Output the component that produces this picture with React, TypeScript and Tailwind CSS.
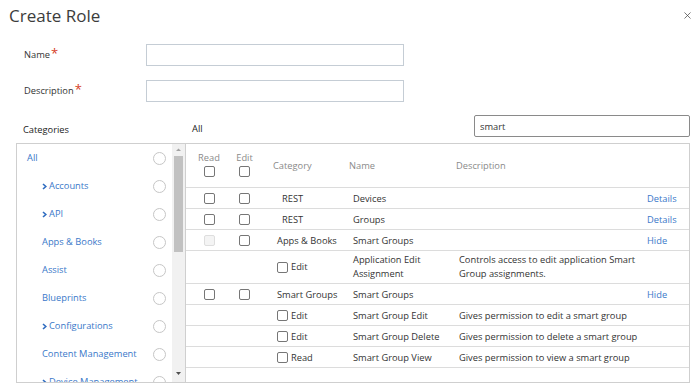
import { X } from "lucide-react";

type Cat = { label: string; chevron?: boolean; root?: boolean };

const categories: Cat[] = [
  { label: "All", root: true },
  { label: "Accounts", chevron: true },
  { label: "API", chevron: true },
  { label: "Apps & Books" },
  { label: "Assist" },
  { label: "Blueprints" },
  { label: "Configurations", chevron: true },
  { label: "Content Management" },
  { label: "Device Management", chevron: true },
];

function Chevron() {
  return (
    <svg width="5" height="7" viewBox="0 0 5 7" className="mr-[2px] shrink-0">
      <path d="M1 1 L3.8 3.5 L1 6" fill="none" stroke="#2f6cc0" strokeWidth="1.6" />
    </svg>
  );
}

function Box({ disabled }: { disabled?: boolean }) {
  return (
    <div
      className={
        disabled
          ? "w-[11px] h-[11px] rounded-[2px] border border-[#dedede] bg-[#f4f4f4]"
          : "w-[11px] h-[11px] rounded-[2px] border border-[#767676] bg-white"
      }
    />
  );
}

function Link({ children }: { children: React.ReactNode }) {
  return <span className="text-[#3a78c9]">{children}</span>;
}

type Row = {
  read?: "box" | "disabled";
  edit?: boolean;
  category?: string;
  indent?: boolean;
  sub?: string;
  name: React.ReactNode;
  desc?: React.ReactNode;
  link?: string;
  tall?: boolean;
};

const rows: Row[] = [
  { read: "box", edit: true, category: "REST", indent: true, name: "Devices", link: "Details" },
  { read: "box", edit: true, category: "REST", indent: true, name: "Groups", link: "Details" },
  { read: "disabled", edit: true, category: "Apps & Books", name: "Smart Groups", link: "Hide" },
  {
    sub: "Edit",
    name: (
      <>
        Application Edit
        <br />
        Assignment
      </>
    ),
    desc: (
      <>
        Controls access to edit application Smart
        <br />
        Group assignments.
      </>
    ),
    tall: true,
  },
  { read: "box", edit: true, category: "Smart Groups", name: "Smart Groups", link: "Hide" },
  { sub: "Edit", name: "Smart Group Edit", desc: "Gives permission to edit a smart group" },
  { sub: "Edit", name: "Smart Group Delete", desc: "Gives permission to delete a smart group" },
  { sub: "Read", name: "Smart Group View", desc: "Gives permission to view a smart group" },
];

export default function App() {
  return (
    <div className="w-[700px] h-[388px] overflow-hidden bg-white text-[#333] font-['Open_Sans',sans-serif] text-[9.3px]">
      <div className="flex items-center justify-between h-[31px] pl-[9px] pr-[7px]">
        <h1 className="text-[17px] leading-none text-[#3c3c3c]">Create Role</h1>
        <X size={11} strokeWidth={1.6} color="#444" />
      </div>

      <div className="mt-[13px] flex flex-col gap-[14px]">
        {["Name", "Description"].map((l) => (
          <div key={l} className="flex items-center h-[22px]">
            <label className="w-[146px] pl-[24px] text-[#333] flex items-center">
              {l}
              <span className="relative -top-[2px] text-[#d6401f] text-[13px] leading-none ml-[1px]">*</span>
            </label>
            <input className="w-[258px] h-[22px] border border-[#c5cdd5] outline-none" />
          </div>
        ))}
      </div>

      <div className="mt-[13px] flex items-end h-[22px] pl-[23px] pr-[10px]">
        <div className="w-[169px] leading-[13px] mb-[1px] text-[#222]">Categories</div>
        <div className="flex-1 leading-[13px] mb-[2px] text-[#222]">All</div>
        <input
          defaultValue="smart"
          className="w-[216px] h-[22px] border border-[#8a8a8a] rounded-[2px] px-[5px] outline-none text-[9.3px] text-[#333]"
        />
      </div>

      <div className="mt-[6px] ml-[16px] flex h-[240px]">
        <div className="w-[169px] flex border-l border-t border-b border-[#cfcfcf] overflow-hidden">
          <div className="flex-1 flex flex-col">
            {categories.map((c) => (
              <div key={c.label} className="h-[28px] shrink-0 flex items-center justify-between pr-[6px]">
                <div
                  className={
                    c.root
                      ? "pl-[10px] flex items-center text-[#3a78c9]"
                      : "pl-[25px] flex items-center text-[#3a78c9]"
                  }
                >
                  {c.chevron && <Chevron />}
                  {c.label}
                </div>
                <div className="w-[13px] h-[13px] rounded-full border border-[#c6c6c6] bg-white" />
              </div>
            ))}
          </div>
          <div className="w-[13px] bg-[#f1f1f1] flex flex-col items-center">
            <svg width="7" height="12" viewBox="0 0 7 12">
              <path d="M1 7 L3.5 4.5 L6 7 Z" fill="#a3a3a3" />
            </svg>
            <div className="w-[9px] h-[96px] bg-[#c1c1c1]" />
            <div className="flex-1" />
            <svg width="7" height="14" viewBox="0 0 7 14">
              <path d="M1 4 L6 4 L3.5 7 Z" fill="#505050" />
            </svg>
          </div>
        </div>

        <div className="w-[505px] border border-[#cfcfcf] flex flex-col">
          <div className="h-[43px] flex text-[#8a8a8a] shrink-0">
            <div className="w-[46px] flex flex-col items-center pt-[7px] gap-[2px]">
              <span className="leading-[13px]">Read</span>
              <Box />
            </div>
            <div className="w-[25px] flex flex-col items-center pt-[7px] gap-[2px]">
              <span className="leading-[13px]">Edit</span>
              <Box />
            </div>
            <div className="w-[92px] pl-[16px] flex items-center">Category</div>
            <div className="w-[106px] flex items-center">Name</div>
            <div className="w-[188px] pl-[1px] flex items-center">Description</div>
            <div className="flex-1" />
          </div>

          {rows.map((r, i) => (
            <div
              key={i}
              className={
                r.tall
                  ? "h-[33px] shrink-0 flex items-center border-t border-[#dcdcdc] leading-[14px]"
                  : "h-[21px] shrink-0 flex items-center border-t border-[#dcdcdc] leading-[13px]"
              }
            >
              <div className="w-[46px] flex justify-center">
                {r.read === "box" && <Box />}
                {r.read === "disabled" && <Box disabled />}
              </div>
              <div className="w-[25px] flex justify-center">{r.edit && <Box />}</div>
              <div className={r.indent ? "w-[92px] pl-[25px]" : "w-[92px] pl-[20px]"}>
                {r.category}
                {r.sub && (
                  <div className="flex items-center gap-[3px]">
                    <Box />
                    <span>{r.sub}</span>
                  </div>
                )}
              </div>
              <div className="w-[106px] pl-[4px]">{r.name}</div>
              <div className="w-[188px] pl-[4px]">{r.desc}</div>
              <div className="flex-1 pl-[4px]">{r.link && <Link>{r.link}</Link>}</div>
            </div>
          ))}
          <div className="flex-1 border-t border-[#dcdcdc]" />
        </div>
      </div>
    </div>
  );
}
